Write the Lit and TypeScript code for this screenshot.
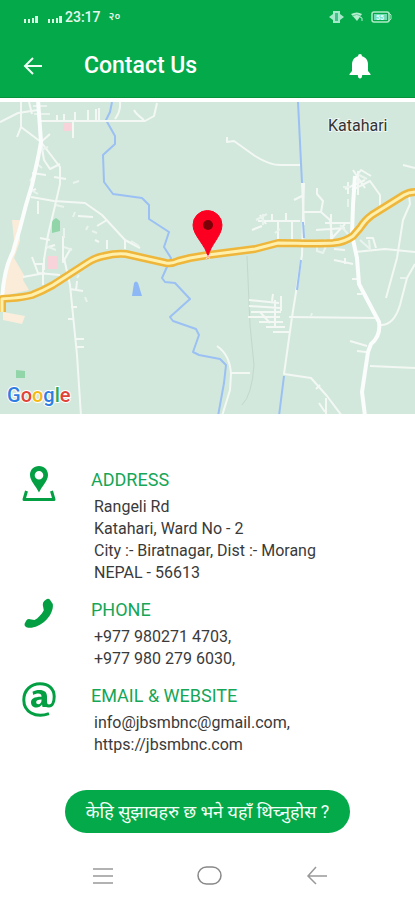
import { LitElement, html, css, svg } from "lit";
import { customElement } from "lit/decorators.js";

const HIGHWAY =
  "M2 312V299C12 298 22 298 32 295C40 292 46 289 53 285L87 263C93 259 98 257 104 256C112 254 118 253 126 254L166 263Q172 264 178 261L190 258L208 255L255 249L278 243C296 243 315 244 333 243Q345 242 353 236L360 228Q365 220 372 215L404 195Q409 192 417 192";

const MAIN_ROADS = [
  "M38 100L41 142L38 158L32 185L26 205L20 228L13 252Q4 268 2 299",
  "M355 176L353 205L352 235L357 258L359 284L379 322Q381 336 371 344L368 352L362 392L365 416",
];

const ROADS = [
  "M0 122L18 113L38 110M21 102V127L41 142M21 127L17 137M29 102L32 114M41 121H145L154 116L157 103M144 120Q136 114 134 110M115 119Q121 111 120 102",
  "M57 120V115M64 120V114M75 120V112M88 120V110M96 120V109M99 120V108M73 122V138M41 142L50 134M41 142L60 167V184L54 210L48 235L44 260M41 142L44 160L50 169L60 164",
  "M31 197L54 201L85 203L102 215L125 240L140 248M78 216L93 217M38 201V214M32 173L46 175M54 177L66 179M29 192L36 189",
  "M32 257L38 273L60 275M35 264H43V285M23 277L45 273M44 258V270M64 258L70 285L77 355L81 416M70 289L83 291M77 281L76 291M71 307H77M68 319H74M75 339H84M76 347H84",
  "M63 236V262L71 248M40 238L50 240M45 248L55 245M97 226L107 220M107 240V249M95 240L99 242M125 240V249",
  "M227 137V142L234 141L255 156Q271 166 283 165H300M302 183L304 225M294 200L302 196M304 212H321L323 201L317 194V188M321 212L330 220L333 243",
  "M258 221H300M278 221V241M272 221V214M286 220V213M292 221V240M260 215L266 224M252 230L262 226M325 223H350M331 214V240M316 230L345 228M333 237L345 224",
  "M355 178L361 170L371 176M345 189L365 180M352 190L370 181L380 195V207M353 170L365 188M348 182V194M358 171V195",
  "M355 252L385 249L415 252M366 238L373 238L376 248M334 249L345 250M409 196L410 204L403 220L397 258L386 298M415 264L407 278L400 305Q394 325 381 325M403 165L415 168",
  "M289 317L376 318M304 183L302 255L292 317L284 374L311 378L327 396L342 416M320 385L316 389M326 398V416M319 403L325 412M370 366L415 368M217 346Q230 355 231 374L230 390L222 416M231 373H250",
  "M249 300L279 303M249 306L280 308M251 312H281M248 317H280M259 322H283M266 327H285M273 332H289M275 300V328M281 296V311M273 294L272 301M260 312L270 323",
  "M334 260L353 264M345 264V258M350 341L367 346M357 351L366 352M352 279H359M357 294H362",
];

const FINE = [
  "M33 106H47M34 114H50M41 150L48 147M36 163L42 168M34 175L30 181M31 190L38 194M56 205L64 207M73 217L75 212M86 230L88 226M73 183L79 181M64 228V238M46 246L56 250M64 247L72 250",
  "M325 249V239M348 207V199M340 225L348 234M280 229L275 233M317 240V251L323 253L327 244M360 240L370 249L369 240M256 220L267 214M263 214V225M343 187H350M359 175L367 179",
  "M85 297L87 302M77 278L79 275M92 231L97 233M131 241L139 246M400 278H406M311 316L312 313",
];

@customElement("town-map")
export class TownMap extends LitElement {
  static styles = css`
    :host { display: block; height: 312px; overflow: hidden; background: #d2e8dc; }
    svg { display: block; width: 100%; height: 100%; }
    .road { fill: none; stroke: #f3f8f5; stroke-width: 2; stroke-linejoin: round; }
    .main { fill: none; stroke: #fbfdfc; stroke-width: 4; stroke-linejoin: round; }
    .fine { fill: none; stroke: #eaf4ee; stroke-width: 2; }
    .water { fill: none; stroke: #9bc0f3; stroke-width: 2; stroke-linejoin: round; }
    .border { fill: none; stroke: #c4d7cd; stroke-width: 1; }
    .edge { fill: none; stroke: #eeb63a; stroke-width: 8; stroke-linejoin: round; }
    .core { fill: none; stroke: #fff0ae; stroke-width: 3; stroke-linejoin: round; }
    .label { font: 16px Roboto, sans-serif; fill: #333; stroke: #eef6f2; stroke-width: 2; paint-order: stroke; }
    .google { font: 500 20px Roboto, sans-serif; stroke: #fff; stroke-width: 2; paint-order: stroke; }
    .b { fill: #2f7de1; } .r { fill: #e04438; } .y { fill: #f5b914; } .g { fill: #34a853; }
  `;
  render() {
    return html`<svg viewBox="0 102 415 312" preserveAspectRatio="xMidYMid slice" role="img" aria-label="Map of Katahari">
      <path d="M12 220H20V241L14 258L24 275L23 280L29 290L3 296L5 275L14 240Z" fill="#faecd9" />
      <path d="M3 312L25 316L22 324L3 320Z" fill="#fbeedc" />
      <path d="M63 123H71V131H63ZM47 256H58V269H47Z" fill="#f8d3d9" />
      <path d="M52 221L56 218L60 221V231L52 233ZM16 370L25 371V378H16Z" fill="#91d5a9" />
      <path d="M134 283Q136 280 138 283L142 296H132Z" fill="#8db8f5" />
      <path class="border" d="M247 256L250 325L254 365Q252 395 242 405" />
      <path class="water" d="M112 102L110 112L106 120L115 136V144L103 155L104 182L113 194L142 198L149 205V219L169 232L164 247L171 258L162 278L165 282L175 283L190 299L170 317L173 321L196 329L199 335L193 352L199 355L220 359L226 365L224 383L218 416" />
      ${ROADS.map((d) => svg`<path class="road" d=${d} />`)}
      ${FINE.map((d) => svg`<path class="fine" d=${d} />`)}
      ${MAIN_ROADS.map((d) => svg`<path class="main" d=${d} />`)}
      <path class="water" d="M298 102L302 183M303 222L304 238M301 260L297 290M284 376L279 416" />
      <path class="edge" d=${HIGHWAY} />
      <path class="core" d=${HIGHWAY} />
      <path d="M208 257C206 245 193 236 193 225A14.500 14.500 0 0 1 222 225C222 236 210 245 208 257Z" fill="#fb0020" stroke="#fb0020" stroke-linejoin="round" />
      <circle cx="208" cy="225" r="5" fill="#7b0008" />
      <path d="M206 254L210 259M210 254L206 259" stroke="#ffd9d9" />
      <text class="label" x="328" y="131">Katahari</text>
      <text class="google" x="7" y="402"><tspan class="b">G</tspan><tspan class="r">o</tspan><tspan class="y">o</tspan><tspan class="b">g</tspan><tspan class="g">l</tspan><tspan class="r">e</tspan></text>
    </svg>`;
  }
}

const pinIcon = svg`<svg viewBox="0 0 34 36" width="34" height="36" aria-hidden="true">
  <path fill-rule="evenodd" d="M17 0C11.800 0 8 3.800 8 9C8 15 14 20 17 26.500C20 20 26 15 26 9C26 3.800 22.200 0 17 0ZM17 5A4.300 4.300 0 1 1 17 13.600A4.300 4.300 0 0 1 17 5Z" fill="#049f43"/>
  <path d="M4.500 25L2 33.500H32L29.500 25" fill="none" stroke="#049f43" stroke-width="3" stroke-linejoin="round"/></svg>`;

const phoneIcon = svg`<svg viewBox="0 0 34 36" width="34" height="36" aria-hidden="true">
  <path d="M24.500 3.200Q26.800 2.200 28.300 4.200L30.800 8C32 16 24 28.500 11.500 31.300C9 32 6.500 32 4.500 31.200Q2 30 2.700 27.500L4.300 24.500Q5.800 22.700 8 23.200L12.500 24C16 22.200 19.500 18.600 21.800 14.200L20.800 9Q20.600 6.500 22.200 5Z" fill="#049f43"/></svg>`;

const atIcon = svg`<svg viewBox="0 0 34 36" width="34" height="36" aria-hidden="true">
  <path d="M27 31.700C13 36.500 1.800 29.500 1.800 18C1.800 8 9 1.800 18 1.800C27 1.800 32.200 7 32.200 14.500C32.200 20.500 30 24 27 24C24.500 24 23.500 22 23.500 20" fill="none" stroke="#049f43" stroke-width="3"/>
  <path fill-rule="evenodd" d="M10.500 9.800C12.500 8.500 15 8 17.300 8C22.500 8 25 10.200 25 14.500V25H20.500L20 22.500C18.700 24.500 16.800 25.500 14.500 25.500C11.300 25.500 9 23.500 9 20.400C9 16.500 12 14.800 19.500 14.700C19.500 12.500 18.500 11.500 16.200 11.500C14.500 11.500 13 12 11.300 13ZM19.500 17.500C15.700 17.500 14.200 18.300 14.200 20.200C14.200 21.400 15 22.200 16.200 22.200C18.200 22.200 19.500 20.500 19.500 18.500Z" fill="#049f43"/></svg>`;

@customElement("app-root")
export class AppRoot extends LitElement {
  static styles = css`
    * { box-sizing: border-box; }
    :host { display: flex; flex-direction: column; min-height: 100vh; background: #fff; color: #3a3a3a; font: 16px/22px Roboto, "Noto Sans", sans-serif; }
    svg { display: block; }
    button { padding: 0; border: 0; background: none; color: inherit; font: inherit; }
    a { color: inherit; text-decoration: none; }
    .top { background: #04a94a; color: #fff; border-bottom: 1px solid #079338; }
    .status { display: flex; align-items: center; justify-content: space-between; height: 34px; padding: 0 23px; color: #e6f8ec; font-size: 14px; font-weight: 500; }
    .group { display: flex; align-items: center; }
    .signal { margin-top: 4px; }
    .time { margin: 0 8px 0 2px; }
    .date { font-size: 11px; line-height: 16px; }
    .right { gap: 6px; }
    .bar { display: flex; align-items: center; height: 63px; padding: 0 42px 0 20px; }
    h1 { flex: 1; margin: 0 0 0 38px; font-size: 23px; line-height: 28px; font-weight: 500; }
    town-map { margin-top: 4px; }
    .details { display: flex; flex-direction: column; gap: 16px; padding: 56px 22px 0; }
    .row { display: flex; gap: 35px; }
    .icon { flex: none; width: 34px; margin-top: -4px; }
    h2 { margin: 0 0 6px; color: #16a658; font-size: 18px; line-height: 20px; font-weight: 400; }
    address, p { margin: 0 0 0 3px; font-style: normal; }
    .send { align-self: center; min-height: 43px; margin-top: 34px; padding: 0 21px; border-radius: 22px; background: #04a94a; color: #f2fff6; font-size: 18px; }
    .nav { display: flex; justify-content: space-between; align-items: center; height: 48px; margin-top: auto; padding: 0 87px 0 92px; }
  `;

  render() {
    return html`
      <header class="top">
        <div class="status">
          <div class="group">
            <svg class="signal" width="40" height="10" viewBox="0 0 40 10" fill="#d9f4e2" aria-hidden="true"><path d="M1 5h2v4H1zM5 5h2v4H5zM9 4h2v5H9zM12 2h3v7h-3zM25 5h2v4h-2zM29 5h2v4h-2zM33 4h2v5h-2zM36 2h3v7h-3z"/></svg>
            <span class="time">23:17</span><span class="date">२०</span>
          </div>
          <div class="group right">
            <svg width="15" height="14" viewBox="0 0 15 14" aria-hidden="true"><path d="M4 1h7v3l4 3-4 3v3H4v-3L0 7l4-3z" fill="#a7e8cb"/><path d="M6 3h3v8H6z" fill="#3ec38c"/></svg>
            <svg width="15" height="12" viewBox="0 0 15 12" aria-hidden="true"><path d="M1 3Q7 0 12 3L7 10Z" fill="#b5edcf"/><path d="M2 5Q7 2 11 5" fill="none" stroke="#62cd96"/><path d="M10 6L12 7V10" fill="none" stroke="#b5edcf"/></svg>
            <svg width="21" height="12" viewBox="0 0 21 12" aria-hidden="true"><rect x="1" y="1" width="17" height="10" rx="2" fill="none" stroke="#b0ebc8" stroke-width="1.500"/><rect x="3" y="3" width="13" height="6" fill="#6fdcb4"/><path d="M18 2l2 2v4l-2 2" fill="none" stroke="#b0ebc8"/><text x="5" y="9" font-family="Roboto" font-size="7" font-weight="700" fill="#f0fff6">55</text></svg>
          </div>
        </div>
        <div class="bar">
          <button aria-label="Back"><svg width="26" height="24" viewBox="0 0 26 24" fill="none" stroke="#effff5" stroke-width="2"><path d="M22 12H5M13 4L5 12L13 20"/></svg></button>
          <h1>Contact Us</h1>
          <button aria-label="Notifications"><svg width="26" height="28" viewBox="0 0 26 28" fill="#fff"><path d="M13 2Q15 2 15 4.200C19 5.200 21 8.500 21 12.500V19L23.500 22V23H2.500V22L5 19V12.500C5 8.500 7 5.200 11 4.200Q11 2 13 2ZM10.800 23H15.200Q15 26.500 13 26.500Q11 26.500 10.800 23Z"/></svg></button>
        </div>
      </header>
      <town-map></town-map>
      <main class="details">
        <section class="row">
          <div class="icon">${pinIcon}</div>
          <div><h2>ADDRESS</h2><address>Rangeli Rd<br />Katahari, Ward No - 2<br />City :- Biratnagar, Dist :- Morang<br />NEPAL - 56613</address></div>
        </section>
        <section class="row">
          <div class="icon">${phoneIcon}</div>
          <div><h2>PHONE</h2><p><a href="tel:+9779802714703">+977 980271 4703,</a><br /><a href="tel:+9779802796030">+977 980 279 6030,</a></p></div>
        </section>
        <section class="row">
          <div class="icon">${atIcon}</div>
          <div><h2>EMAIL &amp; WEBSITE</h2><p><a href="mailto:info@jbsmbnc@gmail.com">info@jbsmbnc@gmail.com,</a><br /><a href="https://jbsmbnc.com">https://jbsmbnc.com</a></p></div>
        </section>
      </main>
      <button class="send">केहि सुझावहरु छ भने यहाँ थिच्नुहोस ?</button>
      <nav class="nav" aria-label="System">
        <button aria-label="Recent apps"><svg width="22" height="20" viewBox="0 0 22 20" stroke="#999" stroke-width="1.500"><path d="M1 3H21M1 10H21M1 17H21"/></svg></button>
        <button aria-label="Home"><svg width="26" height="20" viewBox="0 0 26 20" fill="none" stroke="#888" stroke-width="1.500"><rect x="1" y="1" width="23" height="17" rx="8.500"/></svg></button>
        <button aria-label="Go back"><svg width="22" height="20" viewBox="0 0 22 20" fill="none" stroke="#999" stroke-width="1.500"><path d="M21 10H2M10 1L2 10L10 18"/></svg></button>
      </nav>
    `;
  }
}
